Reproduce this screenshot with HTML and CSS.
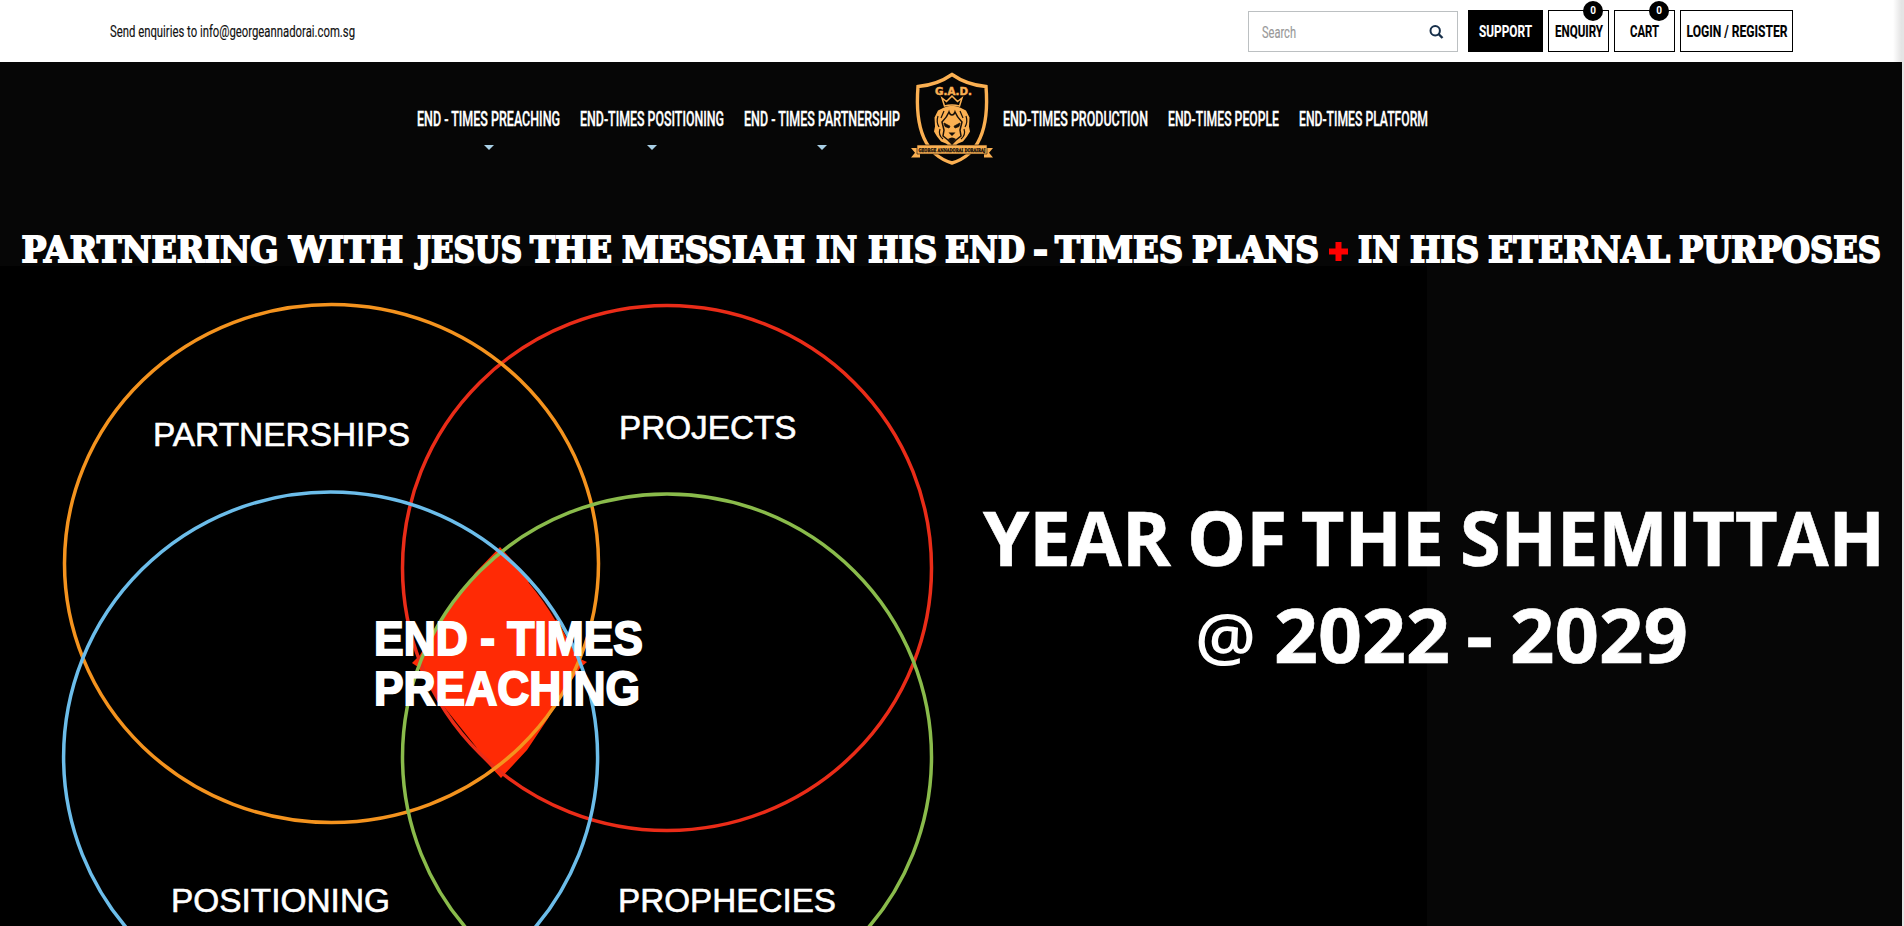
FILE: index.html
```html
<!DOCTYPE html>
<html lang="en">
<head>
<meta charset="utf-8">
<title>George Annadorai</title>
<link rel="stylesheet" href="styles.css">
</head>
<body>
<div class="page">
  <header class="topbar">
    <svg class="label" width="246" height="30"><text x="0" y="21" textLength="245" lengthAdjust="spacingAndGlyphs">Send enquiries to info@georgeannadorai.com.sg</text></svg>
    <div class="actions">
      <div class="search">
        <svg class="label hint" width="36" height="30"><text x="0" y="21" textLength="34" lengthAdjust="spacingAndGlyphs">Search</text></svg>
        <svg width="14" height="14" viewBox="0 0 14 14" fill="none" stroke="#172f4a" stroke-width="2"><circle cx="6.2" cy="5.700" r="4.700"/><path d="M9.500 9l4 4" stroke-width="2.400"/></svg>
      </div>
      <a class="btn solid"><svg class="label strong" width="53" height="30"><text x="0" y="20.500" textLength="53" lengthAdjust="spacingAndGlyphs">SUPPORT</text></svg></a>
      <a class="btn"><svg class="label strong" width="48" height="30"><text x="0" y="20.500" textLength="48" lengthAdjust="spacingAndGlyphs">ENQUIRY</text></svg><span class="badge">0</span></a>
      <a class="btn"><svg class="label strong" width="29" height="30"><text x="0" y="20.500" textLength="29" lengthAdjust="spacingAndGlyphs">CART</text></svg><span class="badge">0</span></a>
      <a class="btn login"><svg class="label strong" width="101" height="30"><text x="0.500" y="20.500" textLength="101" lengthAdjust="spacingAndGlyphs">LOGIN / REGISTER</text></svg></a>
    </div>
  </header>
  <main class="dark">
    <nav class="nav">
      <a class="item drop"><svg class="link" width="143" height="30"><text x="0" y="22" textLength="143" lengthAdjust="spacingAndGlyphs">END - TIMES PREACHING</text></svg></a>
      <a class="item drop"><svg class="link" width="144" height="30"><text x="0" y="22" textLength="144" lengthAdjust="spacingAndGlyphs">END-TIMES POSITIONING</text></svg></a>
      <a class="item drop"><svg class="link" width="156" height="30"><text x="0" y="22" textLength="156" lengthAdjust="spacingAndGlyphs">END - TIMES PARTNERSHIP</text></svg></a>
      <a class="logo">
        <svg width="84" height="94" viewBox="0 0 84 94">
          <path d="M42 2.500 Q57 13 76 14.500 C79 52 72 82 42 91 C12 82 5 52 8 14.500 Q27 13 42 2.500Z" fill="#050505" stroke="#fbb052" stroke-width="3.400"/>
          <text class="initials" x="25" y="22.500" textLength="37" lengthAdjust="spacingAndGlyphs">G.A.D.</text>
          <path d="M32 26l4.500 3.500 5.500-5.500 5.500 5.500 4.500-3.500-2.500 8q-7.500-2-15 0Z" fill="none" stroke="#fbb052" stroke-width="1.500"/>
          <path d="M34 35.500q8-3.500 16 0l6 3 3.500 7-.5 9 1 5-3 5-4 5-5 2-6 5-6-5-5-2-4-5-3-5 1-5-.5-9 3.500-7Z" fill="#fbb052"/>
          <path d="M32 50q5-5 7-10 1 3 3 3t3-3q2 5 7 10l-2 8 1 6-5 4-4 4-4-4-5-4 1-6Z" fill="#fbb052" stroke="#17100a" stroke-width="1.500"/>
          <path d="M34 51l6 3.200-1 1.800-4-1.500ZM50 51l-6 3.200 1 1.800 4-1.500Z" fill="#17100a" stroke="#17100a" stroke-width=".8"/>
          <path d="M38.500 60.500h7L42 64Z M38 67q4-3 8 0l-4 5Z" fill="#17100a"/>
          <path d="M28 44q-2 6 1 11M56 44q2 6-1 11M30 57q-2 6 3 10M54 57q2 6-3 10M34 39l-3 7M50 39l3 7" fill="none" stroke="#17100a" stroke-width="1.200"/>
          <path d="M1 76h9v9.500H1l4-4.700Z M83 76h-9v9.500h9l-4-4.700Z" fill="#fbb052"/>
          <path d="M7 73h70v9H7Z" fill="#fbb052" stroke="#17100a" stroke-width=".6"/>
          <text class="ribbon" x="8.500" y="79.500" textLength="67" lengthAdjust="spacingAndGlyphs">GEORGE ANNADORAI DORAIRAJ</text>
        </svg>
      </a>
      <a class="item"><svg class="link" width="145" height="30"><text x="0" y="22" textLength="145" lengthAdjust="spacingAndGlyphs">END-TIMES PRODUCTION</text></svg></a>
      <a class="item"><svg class="link" width="111" height="30"><text x="0" y="22" textLength="111" lengthAdjust="spacingAndGlyphs">END-TIMES PEOPLE</text></svg></a>
      <a class="item"><svg class="link" width="129" height="30"><text x="0" y="22" textLength="129" lengthAdjust="spacingAndGlyphs">END-TIMES PLATFORM</text></svg></a>
    </nav>
    <svg class="banner" width="1902" height="716" viewBox="0 210 1902 716">
      <rect x="0" y="266" width="1427" height="660" fill="#000"/>
      <g class="headline">
        <text x="21.500" y="261.500" textLength="257" lengthAdjust="spacingAndGlyphs">PARTNERING</text>
        <text x="289" y="261.500" textLength="114" lengthAdjust="spacingAndGlyphs">WITH</text>
        <text x="417" y="261.500" textLength="105" lengthAdjust="spacingAndGlyphs">JESUS</text>
        <text x="530" y="261.500" textLength="82" lengthAdjust="spacingAndGlyphs">THE</text>
        <text x="622" y="261.500" textLength="183" lengthAdjust="spacingAndGlyphs">MESSIAH</text>
        <text x="816" y="261.500" textLength="41" lengthAdjust="spacingAndGlyphs">IN</text>
        <text x="868" y="261.500" textLength="69" lengthAdjust="spacingAndGlyphs">HIS</text>
        <text x="945" y="261.500" textLength="80" lengthAdjust="spacingAndGlyphs">END</text>
        <text x="1033" y="261.500" textLength="15" lengthAdjust="spacingAndGlyphs">-</text>
        <text x="1055" y="261.500" textLength="128" lengthAdjust="spacingAndGlyphs">TIMES</text>
        <text x="1192" y="261.500" textLength="127" lengthAdjust="spacingAndGlyphs">PLANS</text>
        <path class="plus" d="M1338.500 242v19M1329 251.500h19"/>
        <text class="mark" x="1329" y="259" textLength="19" lengthAdjust="spacingAndGlyphs">+</text>
        <text x="1358" y="261.500" textLength="42" lengthAdjust="spacingAndGlyphs">IN</text>
        <text x="1410" y="261.500" textLength="69" lengthAdjust="spacingAndGlyphs">HIS</text>
        <text x="1488" y="261.500" textLength="182" lengthAdjust="spacingAndGlyphs">ETERNAL</text>
        <text x="1679" y="261.500" textLength="202" lengthAdjust="spacingAndGlyphs">PURPOSES</text>
      </g>
      <path class="core" d="M500 547L538 589 557 620 578 658 587 662 580 668 563 693 547 720 527 750 501 778 477 752 450 716 430 686 418 667 412 663 420 655 433 633 447 611 475 573Z"/>
      <path d="M445 614Q457 594 474 576M529 582Q545 601 556 620M444 708L476 748" fill="none" stroke="#200400" stroke-width="1.500"/>
      <g class="rings">
        <ellipse cx="667" cy="568" rx="264.500" ry="262.500" stroke="#ea2c18"/>
        <ellipse cx="331.500" cy="563.500" rx="267" ry="259" stroke="#f4931e"/>
        <ellipse cx="667" cy="757" rx="264.500" ry="263" stroke="#8abb4b"/>
        <ellipse cx="330.600" cy="757" rx="267" ry="265" stroke="#6cbdea"/>
      </g>
      <g class="topic">
        <text x="153" y="446" textLength="257" lengthAdjust="spacingAndGlyphs">PARTNERSHIPS</text>
        <text x="619" y="439" textLength="177.500" lengthAdjust="spacingAndGlyphs">PROJECTS</text>
        <text x="171" y="912" textLength="219" lengthAdjust="spacingAndGlyphs">POSITIONING</text>
        <text x="618" y="912" textLength="218" lengthAdjust="spacingAndGlyphs">PROPHECIES</text>
      </g>
      <g class="center">
        <text x="374" y="654.500" textLength="269" lengthAdjust="spacingAndGlyphs">END - TIMES</text>
        <text x="374" y="704.500" textLength="266" lengthAdjust="spacingAndGlyphs">PREACHING</text>
      </g>
      <g class="year">
        <text x="983" y="565.500" textLength="188" lengthAdjust="spacingAndGlyphs">YEAR</text>
        <text x="1187" y="565.500" textLength="100" lengthAdjust="spacingAndGlyphs">OF</text>
        <text x="1301" y="565.500" textLength="143" lengthAdjust="spacingAndGlyphs">THE</text>
        <text x="1460" y="565.500" textLength="425" lengthAdjust="spacingAndGlyphs">SHEMITTAH</text>
        <text class="at" x="1195" y="661" textLength="61" lengthAdjust="spacingAndGlyphs">@</text>
        <text x="1274" y="662.500" textLength="176" lengthAdjust="spacingAndGlyphs">2022</text>
        <text x="1466" y="662.500" textLength="27" lengthAdjust="spacingAndGlyphs">-</text>
        <text x="1510" y="662.500" textLength="178" lengthAdjust="spacingAndGlyphs">2029</text>
      </g>
    </svg>
  </main>
</div>
</body>
</html>
```
FILE: styles.css
```css
body { margin: 0; background: #e4e4e4; overflow: hidden; font-family: Roboto, "Liberation Sans", sans-serif; }
svg { display: block; overflow: visible; flex: none; }
.page { width: 1902px; height: 926px; overflow: hidden; }
.topbar { box-sizing: border-box; height: 62px; padding: 10px 109px 0 110px; display: flex; justify-content: space-between; align-items: flex-start; background: linear-gradient(90deg, #fff 1893px, #e2e2e2 1902px); }
.topbar > .label { margin-top: 6px; }
.label { font-size: 16px; fill: #111; stroke: #111; stroke-width: .15px; }
.hint { fill: #999; stroke: #999; }
.strong { font-weight: 700; fill: #000; }
.actions { display: flex; gap: 5px; }
.search { box-sizing: border-box; width: 210px; height: 41px; margin: 1px 5px 0 0; padding: 0 14px 0 13px; border: 1px solid #bcc0c2; display: flex; align-items: center; justify-content: space-between; }
.btn { box-sizing: border-box; position: relative; width: 61px; height: 42px; border: 1px solid #000; display: flex; align-items: center; justify-content: center; }
.btn.solid { width: 75px; background: #000; }
.solid .label { fill: #fff; stroke: #fff; }
.btn.login { width: 113px; }
.badge { position: absolute; right: 5px; top: -10px; width: 20px; height: 20px; border-radius: 50%; background: #000; color: #fff; font-size: 10px; font-weight: 700; line-height: 20px; text-align: center; }
.dark { height: 864px; background: #060606; }
.nav { height: 148px; box-sizing: border-box; padding: 10px 0 0 417px; display: flex; gap: 20px; align-items: flex-start; }
.item { margin-top: 32px; }
.link { font-size: 19.500px; font-weight: 500; fill: #fff; stroke: #fff; stroke-width: .35px; }
.drop::after { content: ""; display: block; width: 0; margin: 11px auto 0; border: 5px solid transparent; border-top-color: #a9d0e6; border-bottom: 0; }
.logo { margin: 0 -11px 0 -10px; }
.initials { font: 700 11px "DejaVu Sans", sans-serif; fill: #fbb052; stroke: #fbb052; stroke-width: .5px; }
.ribbon { font: 900 5px "DejaVu Serif", serif; fill: #17100a; stroke: #17100a; stroke-width: .4px; }
.headline { font: 700 35.500px "DejaVu Serif", serif; fill: #fff; stroke: #fff; stroke-width: 1.900px; }
.plus { fill: none; stroke: #f00; stroke-width: 6px; }
.mark { fill: #f00; stroke: none; font-size: 24px; }
.core { fill: #ff2a05; }
.rings { fill: none; stroke-width: 3.500px; }
.topic { font: 400 34px "Liberation Sans", sans-serif; fill: #fff; stroke: #fff; stroke-width: .6px; }
.center { font: 700 49px "Liberation Sans", sans-serif; fill: #fff; stroke: #fff; stroke-width: 2px; }
.year { font: 700 76px "Open Sans", "Noto Sans", sans-serif; fill: #fff; stroke: #fff; stroke-width: .6px; }
.at { font-weight: 600; font-size: 66px; stroke: none; }
```
